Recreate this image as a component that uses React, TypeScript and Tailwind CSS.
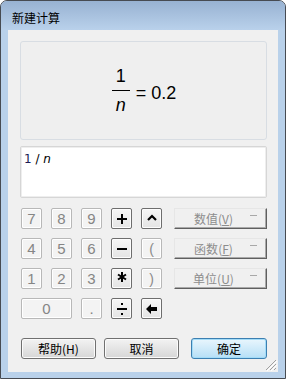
import React from "react";

const cjk = "font-['Noto_Sans_CJK_SC',sans-serif]";

function NumBtn({ label, wide }: { label: string; wide?: boolean }) {
  return (
    <div
      className={`${wide ? "col-span-2" : ""} h-[21px] flex items-center justify-center rounded-[2px] border border-[#b8b8b8] bg-[#f3f3f3] shadow-[inset_0_0_0_1px_#ffffff] text-[15px] leading-none text-[#858585] font-['Liberation_Sans',sans-serif]`}
    >
      {label}
    </div>
  );
}

function OpBtn({ children }: { children: React.ReactNode }) {
  return (
    <div className="h-[21px] flex items-center justify-center rounded-[2px] border border-[#6e6e6e] bg-linear-to-b from-[#f6f6f6] to-[#e4e4e4] shadow-[inset_0_0_0_1px_#fdfdfd]">
      {children}
    </div>
  );
}

const Plus = () => (
  <svg width="10" height="10" viewBox="0 0 10 10" shapeRendering="crispEdges">
    <rect x="0" y="4" width="10" height="2" fill="#000" />
    <rect x="4" y="0" width="2" height="10" fill="#000" />
  </svg>
);
const Minus = () => (
  <svg width="10" height="10" viewBox="0 0 10 10" shapeRendering="crispEdges">
    <rect x="0" y="4" width="10" height="2" fill="#000" />
  </svg>
);
const Star = () => (
  <svg width="10" height="10" viewBox="0 0 10 10" className="-mt-[4px]">
    <line x1="5" y1="0" x2="5" y2="10" stroke="#000" strokeWidth="2" />
    <line x1="1" y1="2.5" x2="9" y2="7.5" stroke="#000" strokeWidth="2" />
    <line x1="1" y1="7.5" x2="9" y2="2.5" stroke="#000" strokeWidth="2" />
  </svg>
);
const Divide = () => (
  <svg width="10" height="12" viewBox="0 0 10 12" shapeRendering="crispEdges">
    <rect x="4" y="0" width="2" height="2" fill="#000" />
    <rect x="0" y="5" width="10" height="2" fill="#000" />
    <rect x="4" y="10" width="2" height="2" fill="#000" />
  </svg>
);
const Caret = () => (
  <svg width="10" height="7" viewBox="0 0 10 7" className="-mt-[2px]">
    <polyline points="1,6 5,2 9,6" fill="none" stroke="#000" strokeWidth="2.2" />
  </svg>
);
const Back = () => (
  <svg width="11" height="10" viewBox="0 0 11 10">
    <polygon points="0,5 5,0 5,3 11,3 11,7 5,7 5,10" fill="#000" />
  </svg>
);

function Paren({ ch }: { ch: string }) {
  return (
    <div className="h-[21px] flex items-center justify-center rounded-[2px] border border-[#b8b8b8] bg-[#f3f3f3] shadow-[inset_0_0_0_1px_#ffffff] text-[14px] leading-none text-[#8a8a8a] font-['Liberation_Sans',sans-serif]">
      {ch}
    </div>
  );
}

function Drop({ name, key2 }: { name: string; key2: string }) {
  return (
    <div className="h-[21px] flex items-stretch border border-t-[#e6e6e6] border-l-[#e6e6e6] border-b-[#5f5f5f] border-r-[#5f5f5f] bg-[#f0f0f0] shadow-[inset_-1px_-1px_0_#a9a9a9]">
      <div className={`flex-1 flex items-center justify-center pl-[6px] text-[12px] leading-none text-[#8d8d8d] ${cjk}`}>
        {name}(<span className="underline">{key2}</span>)
      </div>
      <div className="w-[20px] relative">
        <div className="absolute left-[4px] top-[6px] w-[7px] h-px bg-[#a8a8a8]" />
      </div>
    </div>
  );
}

function WinBtn({ children, primary, w }: { children: React.ReactNode; primary?: boolean; w: string }) {
  return (
    <div
      className={`${w} h-[21px] flex items-center justify-center rounded-[3px] border text-[12px] leading-none text-black ${cjk} ${
        primary
          ? "border-[#3c7fb1] bg-linear-to-b from-[#e9f6fd] to-[#b6dff6] shadow-[inset_0_0_0_1px_#a3dcf8]"
          : "border-[#707070] bg-linear-to-b from-[#f3f3f3] to-[#d6d6d6] shadow-[inset_0_0_0_1px_#fbfbfb]"
      }`}
    >
      {children}
    </div>
  );
}

export default function App() {
  return (
    <div className="w-[286px] h-[379px] flex flex-col border border-[#474b52] rounded-t-[7px] bg-[#b9d1ea] overflow-hidden">
      <div className={`h-[29px] shrink-0 bg-linear-to-b from-[#98b2d2] to-[#b9d1eb] pl-[11px] pt-[9px] text-[12px] leading-[16px] text-black ${cjk}`}>
        新建计算
      </div>
      <div className="relative mx-[7px] w-[270px] h-[342px] shrink-0 bg-[#f0f0f0] flex flex-col">
        {/* display */}
        <div className="mt-[11px] ml-[12px] w-[247px] h-[99px] rounded-[3px] border border-[#d8dde3] bg-[#efefef] flex items-center justify-center font-['Liberation_Sans',sans-serif] text-[18px] leading-[18px] text-black">
          <div className="flex items-start -mr-[1px]">
            <div className="flex flex-col items-center">
              <span>1</span>
              <div className="mt-[5px] w-[18px] h-px bg-black" />
              <span className="mt-[5px] italic">n</span>
            </div>
            <span className="ml-[6px] mt-[17px]">= 0.2</span>
          </div>
        </div>
        {/* input */}
        <div className="mt-[6px] ml-[12px] w-[247px] h-[52px] rounded-[2px] border border-[#d6d6d6] bg-white shadow-[inset_0_0_0_1px_#eeeeee] pl-[3px] pt-[5px] font-['DejaVu_Sans',sans-serif] text-[12px] leading-[14px] text-black">
          <span className="text-[#1c1c55]">1</span> / <span className="italic">n</span>
        </div>
        {/* keypad */}
        <div className="mt-[10px] ml-[13px] flex">
          <div className="grid grid-cols-[repeat(5,21px)] gap-x-[9px] gap-y-[9px]">
            <NumBtn label="7" />
            <NumBtn label="8" />
            <NumBtn label="9" />
            <OpBtn><Plus /></OpBtn>
            <OpBtn><Caret /></OpBtn>
            <NumBtn label="4" />
            <NumBtn label="5" />
            <NumBtn label="6" />
            <OpBtn><Minus /></OpBtn>
            <Paren ch="(" />
            <NumBtn label="1" />
            <NumBtn label="2" />
            <NumBtn label="3" />
            <OpBtn><Star /></OpBtn>
            <Paren ch=")" />
            <NumBtn label="0" wide />
            <NumBtn label="." />
            <OpBtn><Divide /></OpBtn>
            <OpBtn><Back /></OpBtn>
          </div>
          <div className="ml-[12px] w-[93px] flex flex-col gap-[9px]">
            <Drop name="数值" key2="V" />
            <Drop name="函数" key2="F" />
            <Drop name="单位" key2="U" />
          </div>
        </div>
        {/* buttons */}
        <div className="mt-[19px] ml-[13px] flex">
          <WinBtn w="w-[75px]">帮助(H)</WinBtn>
          <div className="ml-[8px]">
            <WinBtn w="w-[75px]">取消</WinBtn>
          </div>
          <div className="ml-[12px]">
            <WinBtn w="w-[76px]" primary>确定</WinBtn>
          </div>
        </div>
        {/* resize grip */}
        <svg className="absolute right-[1px] bottom-[1px]" width="12" height="12" viewBox="0 0 12 12">
          <line x1="11" y1="1" x2="1" y2="11" stroke="#a0a0a0" strokeWidth="1" />
          <line x1="12" y1="2" x2="2" y2="12" stroke="#ffffff" strokeWidth="1" />
          <line x1="11" y1="5" x2="5" y2="11" stroke="#a0a0a0" strokeWidth="1" />
          <line x1="12" y1="6" x2="6" y2="12" stroke="#ffffff" strokeWidth="1" />
          <line x1="11" y1="9" x2="9" y2="11" stroke="#a0a0a0" strokeWidth="1" />
        </svg>
      </div>
    </div>
  );
}
